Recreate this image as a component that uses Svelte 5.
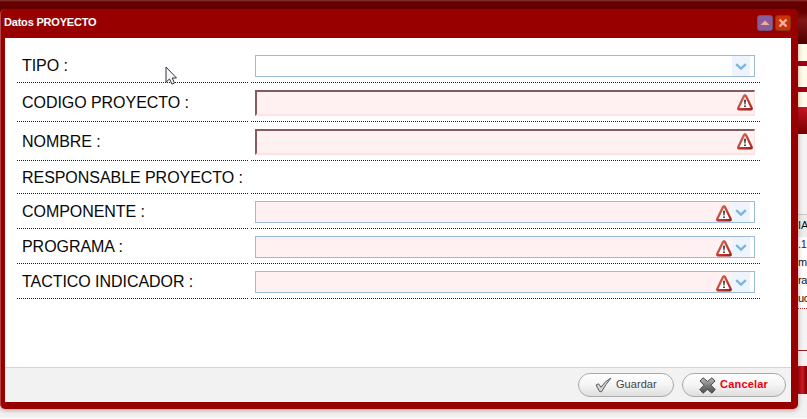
<script>
  const rows = [
    { label: 'TIPO :', kind: 'combo', height: 35 },
    { label: 'CODIGO PROYECTO :', kind: 'input', height: 39 },
    { label: 'NOMBRE :', kind: 'input', height: 39 },
    { label: 'RESPONSABLE PROYECTO :', kind: 'none', height: 33 },
    { label: 'COMPONENTE :', kind: 'combo', height: 35, error: true },
    { label: 'PROGRAMA :', kind: 'combo', height: 35, error: true },
    { label: 'TACTICO INDICADOR :', kind: 'combo', height: 35, error: true }
  ];
</script>

{#snippet warning()}
  <svg class="warning" width="16" height="17" viewBox="0 0 16 17">
    <defs>
      <linearGradient id="warn" x1="0" x2="1" y1="0" y2="1">
        <stop offset="0" stop-color="#ee8a78" /><stop offset=".5" stop-color="#d0392c" /><stop offset="1" stop-color="#981a15" />
      </linearGradient>
    </defs>
    <path d="M6.5 1.2Q8 -.3 9.5 1.2L15.6 14Q16 16.2 14 16.2H2Q0 16.2 .4 14Z" fill="url(#warn)" stroke="#97413b" stroke-width=".6" />
    <path d="M8 2.8L13.6 14H2.4Z" fill="#fffafa" />
    <path d="M7.1 5.8H8.9L8.5 10.6H7.5ZM7.2 11.6H8.8V13.1H7.2Z" fill="#222" />
  </svg>
{/snippet}

<main>
  <aside class="behind">
    <div class="dark"></div>
    <div class="cream" style:height="17px"></div>
    <div class="rule"></div>
    <div class="cream" style:height="21px"></div>
    <div class="rule"></div>
    <div class="cream" style:height="15px"></div>
    <div class="band"></div>
    <div class="gap"></div>
    <div class="head">IA</div>
    <div class="cells"><span class="num">.1</span><span>m</span><span>ra</span><span>uc</span></div>
    <div class="tail"></div>
    <div class="band lower"></div>
  </aside>

  <section class="dialog">
    <header>
      <span>Datos PROYECTO</span>
      <div class="tools">
        <svg width="16" height="16" viewBox="0 0 16 16">
          <rect x=".5" y=".5" width="15" height="15" rx="2.5" fill="#895e98" stroke="#735072" />
          <path d="M3.5 10L8 5.5L12.5 10Z" fill="#f0aaa6" />
        </svg>
        <svg width="16" height="16" viewBox="0 0 16 16">
          <rect x=".5" y=".5" width="15" height="15" rx="2.5" fill="#cb3209" stroke="#8c350c" />
          <path d="M4.5 4.5L11.5 11.5M11.5 4.5L4.5 11.5" stroke="#f4b3a3" stroke-width="2.4" />
        </svg>
      </div>
    </header>

    <div class="body">
      {#each rows as row}
        <div class="row" style:height="{row.height}px">
          <div class="label">{row.label}</div>
          <div class="value">
            {#if row.kind === 'input'}
              <div class="input">{@render warning()}</div>
            {:else if row.kind === 'combo'}
              <div class="combo" class:error={row.error}>
                {#if row.error}{@render warning()}{/if}
                <div class="arrow">
                  <svg width="12" height="8" viewBox="0 0 12 8"><path d="M1.2 1.2L6 5.6L10.8 1.2" fill="none" stroke="#79b5df" stroke-width="2.3" /></svg>
                </div>
              </div>
            {/if}
          </div>
        </div>
      {/each}
    </div>

    <footer>
      <div class="button save">
        <svg width="17" height="16" viewBox="0 0 17 16">
          <path d="M1 8L3.5 6.8L6 10.2Q10.5 3.5 16 1Q10.5 7.5 6.5 14.8L4.5 14.5Z" fill="#d3d3d3" stroke="#5d5d5d" stroke-linejoin="round" />
        </svg>
        <span>Guardar</span>
      </div>
      <div class="button cancel">
        <svg width="17" height="17" viewBox="0 0 17 17">
          <defs>
            <linearGradient id="cross" x1="0" x2="0" y1="0" y2="1"><stop offset="0" stop-color="#bcbcbc" /><stop offset=".55" stop-color="#777" /><stop offset="1" stop-color="#505050" /></linearGradient>
          </defs>
          <path d="M4 .8L8.5 4.4L13 .8L16 4L12 8.2L16.2 12.5L13 16.2L8.5 12.4L4 16.2L.8 12.5L5 8.2L1 4Z" fill="url(#cross)" stroke="#484848" stroke-linejoin="round" />
        </svg>
        <span>Cancelar</span>
      </div>
    </footer>
  </section>

  <svg class="pointer" width="13" height="20" viewBox="0 0 13 20">
    <path d="M1 1V16.2L4.5 13L7 18.2L9.5 17L7.2 12H11.5Z" fill="#f8f8fa" stroke="#30303a" />
  </svg>
</main>

<style>
  :global(body) { margin: 0; overflow: hidden; }
  main {
    position: relative;
    box-sizing: border-box;
    width: 807px;
    height: 419px;
    padding-top: 9px;
    overflow: hidden;
    background: linear-gradient(#8b3434 0, #650000 2px, #650000 14px, #f2f2f2 14px);
    border-bottom: 1px solid #fff;
    font-family: "Liberation Sans", Arial, sans-serif;
  }
  .behind {
    position: absolute;
    top: 0;
    right: 0;
    width: 9px;
    font-size: 11px;
    color: #111;
  }
  .dark { height: 44px; background: linear-gradient(#8b3434 0, #650000 2px, #650000 12px, #811818 20px, #500000 43px); }
  .cream { background: #fffde9; }
  .rule { height: 5px; background: #a40014; }
  .band { height: 27px; background: linear-gradient(#c81422, #760000); }
  .lower { height: 28px; background: linear-gradient(90deg, #980a10, #d01824 50%, #700000); }
  .gap { height: 80px; background: #f3f3f3; }
  .head { height: 23px; line-height: 20px; background: #ededed; border-top: 1px solid #c9c9c9; box-sizing: border-box; }
  .cells { display: flex; flex-direction: column; height: 71px; background: #fff; border-bottom: 1px dotted #a33; }
  .cells span { height: 18px; line-height: 15px; flex: none; letter-spacing: -.3px; }
  .cells .num { color: #22226a; }
  .tail { height: 57px; background: linear-gradient(#f4f4f4 41px, #8c2020 41px, #8c2020 42px, #f4f4f4 42px); }

  .dialog {
    position: relative;
    display: flex;
    flex-direction: column;
    box-sizing: border-box;
    width: 798px;
    height: 400px;
    padding: 0 7px 7px 4px;
    background: #980000;
    border-left: 1px solid #b84545;
    border-radius: 5px;
    box-shadow: 0 1px 5px rgba(110, 0, 0, .4);
  }
  header {
    display: flex;
    justify-content: space-between;
    flex: none;
    height: 29px;
    margin-left: -1px;
    color: #fff;
    font-weight: bold;
    font-size: 11px;
    letter-spacing: -.2px;
    line-height: 27px;
  }
  .tools { display: flex; gap: 2px; padding-top: 6px; }
  .body { flex: 1; padding: 10px 0 0 12px; background: #fff; }
  .row { display: grid; grid-template-columns: 231px 509px; column-gap: 3px; }
  .label, .value { display: flex; align-items: center; box-sizing: border-box; border-bottom: 1px dotted #222; }
  .label { padding: 2px 0 0 5px; font-size: 16px; letter-spacing: -.05px; color: #080808; white-space: nowrap; }
  .value { padding-left: 4px; }
  .input {
    display: flex;
    align-items: center;
    justify-content: flex-end;
    box-sizing: border-box;
    width: 500px;
    height: 26px;
    padding-right: 1px;
    margin-top: 1px;
    background: #fff1f1;
    border: 2px solid #855b5d;
    border-right: 1px solid #ffe2e2;
    border-bottom-color: #ffe2e2;
  }
  .combo {
    display: flex;
    align-items: center;
    justify-content: flex-end;
    box-sizing: border-box;
    width: 500px;
    height: 22px;
    padding-right: 4px;
    margin-top: 1px;
    background: #fff;
    border: 1px solid #9bbbd8;
  }
  .combo.error { background: linear-gradient(90deg, #fff1f1 476px, #fff 476px); }
  .combo .warning { margin-top: 4px; }
  .arrow { display: flex; align-items: center; justify-content: center; box-sizing: border-box; width: 18px; height: 20px; padding-top: 2px; background: #edf4fe; }
  .warning { flex: none; }
  footer {
    display: flex;
    justify-content: flex-end;
    flex: none;
    gap: 8px;
    box-sizing: border-box;
    height: 35px;
    padding: 5px 5px 0 0;
    background: #f2f2f2;
    border-top: 1px solid #d5d5d5;
  }
  .button {
    display: flex;
    align-items: center;
    box-sizing: border-box;
    width: 96px;
    height: 24px;
    padding-left: 16px;
    gap: 4px;
    border: 1px solid #aaa;
    border-radius: 12px;
    background: linear-gradient(#fff, #f4f4f4 50%, #dedede);
    font-size: 11px;
    line-height: 20px;
    color: #444;
  }
  .button span { padding-bottom: 2px; }
  .save { letter-spacing: .05px; }
  .cancel { width: 104px; color: #ed0010; font-weight: bold; letter-spacing: .2px; }
  .pointer { position: absolute; left: 165px; top: 66px; }
</style>
